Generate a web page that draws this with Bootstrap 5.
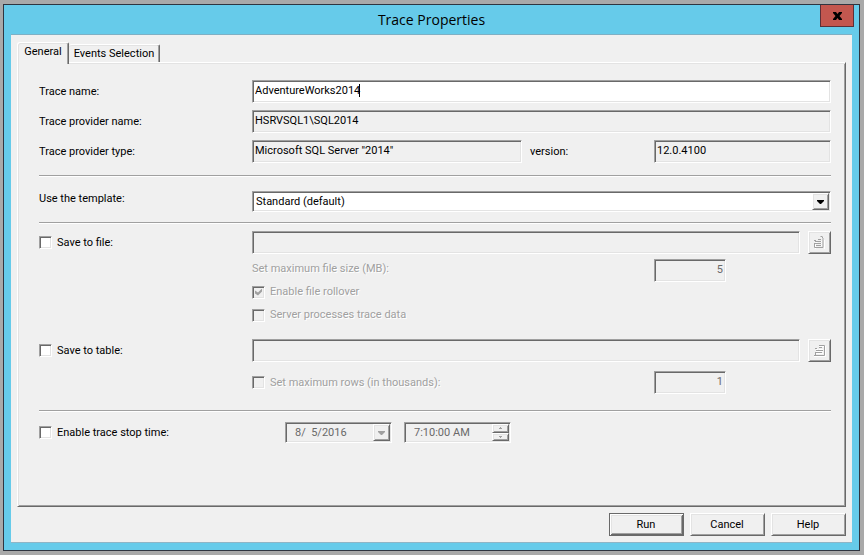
<!DOCTYPE html>
<html lang="en">
<head>
<meta charset="utf-8">
<meta name="viewport" content="width=device-width, initial-scale=1">
<title>Trace Properties</title>
<link href="https://cdn.jsdelivr.net/npm/bootstrap@5.3.0/dist/css/bootstrap.min.css" rel="stylesheet">
<style>
:root { --face: #f0f0f0; --mid: #a0a0a0; --dark: #696969; --soft: #e3e3e3; }
body { background: #a9a9a9; color: #000; font: 11px/16px Roboto, "Liberation Sans", Arial, sans-serif; padding: 4px 4px 4px 3px; }
.dialog-window { background: #66cbea; border: 1px solid #2f3540; padding: 0 7px 7px; }
.title-bar { display: grid; grid-template-columns: 1fr auto 1fr; height: 29px; }
.title-bar h1 { font: 14px/30px "Open Sans", "Noto Sans", sans-serif; }
.close-btn { justify-self: end; width: 34px; height: 22px; margin-right: -2px; background: #c3574f; border: 1px solid #5c3038; border-top: 0; }
.client-area { background: var(--face); border-top: 1px solid #7fb0c4; border-bottom: 1px solid #8fb5c6; padding: 7px 6px 6px; }
.tab-strip { position: relative; margin-bottom: -2px; height: 22px; }
.tab-btn { background: var(--face); color: #000; padding: 0; width: 91px; height: 18px; line-height: 18px; border: 1px solid #fff; border-right-color: var(--dark); border-bottom: 0; border-left: 0; border-radius: 3px 2px 0 0; box-shadow: inset -1px 0 var(--mid), inset 0 1px var(--soft); }
.tab-btn.active { width: 52px; height: 22px; line-height: 18px; padding: 0 0 4px; border-left: 1px solid #fff; box-shadow: inset -1px 0 var(--mid), inset 1px 1px var(--soft); }
.tab-page { border: 1px solid #fff; border-right-color: var(--dark); border-bottom-color: var(--dark); box-shadow: inset 1px 1px var(--soft), inset -1px -1px var(--mid); padding: 17px 14px 16px 21px; }
.form-line { display: grid; grid-template-columns: 213px minmax(0, 1fr); align-items: center; }
.sunken { border: 1px solid; border-color: var(--mid) #fff #fff var(--mid); box-shadow: inset 1px 1px var(--dark), inset -1px -1px var(--soft); background: var(--face); color: #000; border-radius: 0; }
.field { height: 23px; width: 100%; padding: 0 2px 3px; outline: 0; }
.field:disabled { color: var(--dark); }
.bg-field { background: #fff; }
.raised { border: 1px solid; border-color: #fff var(--dark) var(--dark) #fff; box-shadow: inset 1px 1px var(--soft), inset -1px -1px var(--mid); background: var(--face); border-radius: 0; color: #000; }
.etched { margin: 0; border: 0; opacity: 1; height: 2px; background: linear-gradient(var(--mid) 50%, #fff 50%); }
.stack-cell { display: grid; align-items: center; }
.stack-cell > * { grid-area: 1 / 1; }
.combo { height: 21px; width: 100%; appearance: none; padding: 0 20px 0 3px; }
.drop-arrow { justify-self: end; margin-right: 2px; width: 17px; height: 17px; pointer-events: none; display: grid; place-items: center; }
.tick-row { display: flex; align-items: center; gap: 5px; }
.tick { appearance: none; width: 13px; height: 13px; margin: 0; background: #fff; flex: none; }
.tick:disabled { background: var(--face); }
.tick:checked::before { content: ""; display: block; width: 7px; height: 7px; margin: 2px; background: var(--mid); clip-path: polygon(0 28%, 43% 57%, 100% 0, 100% 43%, 43% 100%, 0 71%); }
.tick-list { display: grid; gap: 7px; }
.dimmed { color: var(--mid); text-shadow: 1px 1px #fff; }
.dimmed input { text-shadow: none; }
.browse-btn { width: 23px; height: 23px; padding: 0; flex: none; display: grid; place-items: center; }
.num-field { width: 72px; text-align: right; }
.side-col { width: 177px; flex: none; }
.type-col { width: 270px; }
.stop-col { width: 246px; }
.picker { width: 107px; }
.picker .field { height: 21px; padding: 0 20px 0 9px; }
.spin { justify-self: end; margin-right: 2px; width: 17px; height: 17px; display: grid; grid-template-rows: 1fr 1fr; }
.spin button { padding: 0; display: grid; place-items: center; min-height: 0; }
.mt-2px { margin-top: 2px; }
.mt-5px { margin-top: 5px; }
.mt-7px { margin-top: 7px; }
.mt-9px { margin-top: 9px; }
.mt-10px { margin-top: 10px; }
.mt-12px { margin-top: 12px; }
.mt-14px { margin-top: 14px; }
.caret-mark { position: absolute; left: 107px; top: 4px; width: 1px; height: 13px; background: #000; }
.cmd-row { gap: 6px; margin-top: 6px; }
.cmd-btn { width: 75px; height: 23px; padding: 0 1px 0 0; text-align: center; }
.default-btn { border-color: var(--dark); box-shadow: inset 1px 1px #fff, inset -1px -1px var(--dark), inset 2px 2px var(--soft), inset -2px -2px var(--mid); }
svg { display: block; }
</style>
</head>
<body class="min-vh-100 d-flex">
<main class="dialog-window d-flex flex-column flex-grow-1">
  <header class="title-bar">
    <span></span>
    <h1 class="m-0">Trace Properties</h1>
    <button type="button" class="close-btn d-flex align-items-center justify-content-center p-0" aria-label="Close">
      <svg width="9" height="8" viewBox="0 0 9 8"><path d="M0 0h3l1.500 2L6 0h3v1L6.500 4 9 7v1H6L4.500 6 3 8H0V7l2.500-3L0 1z" fill="#000"/></svg>
    </button>
  </header>
  <form class="client-area d-flex flex-column flex-grow-1">
    <div class="tab-strip d-flex" role="tablist">
      <button type="button" class="tab-btn active" role="tab" aria-selected="true">General</button>
      <button type="button" class="tab-btn mt-2px" role="tab" aria-selected="false">Events Selection</button>
    </div>
    <section class="tab-page flex-grow-1" role="tabpanel">
      <div class="form-line">
        <label for="traceName">Trace name:</label>
        <div class="position-relative"><input id="traceName" class="sunken field bg-field d-block" value="AdventureWorks2014"><span class="caret-mark"></span></div>
      </div>
      <div class="form-line mt-7px">
        <label for="provName">Trace provider name:</label>
        <input id="provName" class="sunken field" value="HSRVSQL1\SQL2014" readonly>
      </div>
      <div class="form-line mt-7px">
        <label for="provType">Trace provider type:</label>
        <div class="d-flex align-items-center justify-content-between">
          <input id="provType" class="sunken field type-col" value='Microsoft SQL Server "2014"' readonly>
          <label for="version" class="flex-grow-1 ps-2">version:</label>
          <div class="side-col"><input id="version" class="sunken field d-block" value="12.0.4100" readonly></div>
        </div>
      </div>
      <hr class="etched mt-12px">
      <div class="form-line align-items-start mt-14px">
        <label for="template">Use the template:</label>
        <div class="stack-cell">
          <select id="template" class="sunken combo bg-field"><option>Standard (default)</option></select>
          <span class="raised drop-arrow"><svg width="7" height="4" viewBox="0 0 7 4"><path d="M0 0h7v1L4 4H3L0 1z"/></svg></span>
        </div>
      </div>
      <hr class="etched mt-10px">
      <div class="form-line mt-7px">
        <div class="tick-row"><input type="checkbox" id="saveFile" class="sunken tick"><label for="saveFile">Save to file:</label></div>
        <div class="d-flex gap-2">
          <input class="sunken field" aria-label="File path" disabled>
          <button type="button" class="raised browse-btn" aria-label="Browse for file" disabled>
            <svg width="11" height="13" viewBox="0 0 11 13" fill="none"><path d="M6.500 1h2M8.500 2v1M.5 5.500h2M4 4.500h3M1 6.500h6M0 8.500h7M.5 7v5.500h9V3M2 10.500h5" stroke="#fff" transform="translate(1 1)"/><path d="M6.500.5h2M8 1.500h1M0 4.500h2M4 3.500h3M1 5.500h6M0 7.500h7M.5 7v4.500h8.500V2M2 9.500h5" stroke="#a0a0a0"/></svg>
          </button>
        </div>
      </div>
      <div class="form-line mt-5px">
        <span></span>
        <div class="d-flex justify-content-between dimmed">
          <label for="maxSize" class="mt-2px">Set maximum file size (MB):</label>
          <div class="side-col"><input id="maxSize" class="sunken field num-field d-block" value="5" disabled></div>
        </div>
      </div>
      <div class="form-line dimmed mt-2px">
        <span></span>
        <div class="tick-list">
          <div class="tick-row"><input type="checkbox" id="rollover" class="sunken tick" checked disabled><label for="rollover">Enable file rollover</label></div>
          <div class="tick-row"><input type="checkbox" id="serverProc" class="sunken tick" disabled><label for="serverProc">Server processes trace data</label></div>
        </div>
      </div>
      <div class="form-line mt-3">
        <div class="tick-row"><input type="checkbox" id="saveTable" class="sunken tick"><label for="saveTable">Save to table:</label></div>
        <div class="d-flex gap-2">
          <input class="sunken field" aria-label="Table" disabled>
          <button type="button" class="raised browse-btn" aria-label="Browse for table" disabled>
            <svg width="12" height="12" viewBox="0 0 12 12" fill="none"><path d="M5 1.500h6M11.500 1v10.500H0M2 4.500h2M5 4.500h4M2 6.500h7M2 8.500h7" stroke="#fff"/><path d="M5 .5h5.500v10H0M1 3.500h2M5 2.500h3M2 5.500h7M1 7.500h7M1.500 7v3" stroke="#a0a0a0"/></svg>
          </button>
        </div>
      </div>
      <div class="form-line mt-9px">
        <span></span>
        <div class="d-flex align-items-center justify-content-between dimmed">
          <div class="tick-row"><input type="checkbox" id="maxRowsOn" class="sunken tick" disabled><label for="maxRowsOn">Set maximum rows (in thousands):</label></div>
          <div class="side-col"><input class="sunken field num-field d-block" aria-label="Maximum rows" value="1" disabled></div>
        </div>
      </div>
      <hr class="etched mt-3">
      <div class="d-flex align-items-center mt-10px">
        <div class="tick-row stop-col"><input type="checkbox" id="stopTime" class="sunken tick"><label for="stopTime">Enable trace stop time:</label></div>
        <div class="stack-cell picker me-2">
          <input class="sunken field" aria-label="Stop date" value="8/  5/2016" disabled>
          <span class="raised drop-arrow"><svg width="7" height="4" viewBox="0 0 7 4" fill="#a0a0a0"><path d="M0 0h7v1L4 4H3L0 1z"/></svg></span>
        </div>
        <div class="stack-cell picker ms-1">
          <input class="sunken field" aria-label="Stop time" value="7:10:00 AM" disabled>
          <div class="spin">
            <button type="button" class="raised" aria-label="Later" disabled><svg width="3" height="2" viewBox="0 0 3 2" fill="#a0a0a0"><path d="M1 0h1v1h1v1H0V1h1z"/></svg></button>
            <button type="button" class="raised" aria-label="Earlier" disabled><svg width="3" height="2" viewBox="0 0 3 2" fill="#a0a0a0"><path d="M0 0h3v1H2v1H1V1H0z"/></svg></button>
          </div>
        </div>
      </div>
    </section>
    <footer class="d-flex justify-content-end cmd-row">
      <button type="button" class="raised cmd-btn default-btn">Run</button>
      <button type="button" class="raised cmd-btn">Cancel</button>
      <button type="button" class="raised cmd-btn">Help</button>
    </footer>
  </form>
</main>
<script src="https://cdn.jsdelivr.net/npm/bootstrap@5.3.0/dist/js/bootstrap.bundle.min.js"></script>
</body>
</html>
